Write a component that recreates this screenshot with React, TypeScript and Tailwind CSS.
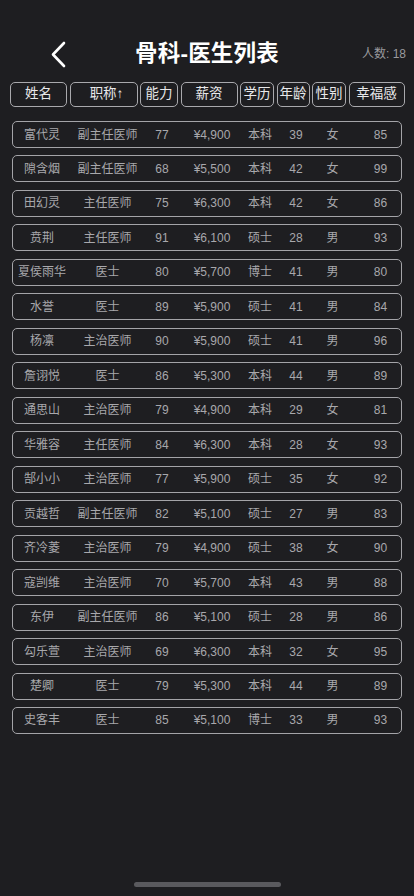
import React from "react";

const rows: string[][] = [
  ["富代灵", "副主任医师", "77", "¥4,900", "本科", "39", "女", "85"],
  ["隙含烟", "副主任医师", "68", "¥5,500", "本科", "42", "女", "99"],
  ["田幻灵", "主任医师", "75", "¥6,300", "本科", "42", "女", "86"],
  ["贲荆", "主任医师", "91", "¥6,100", "硕士", "28", "男", "93"],
  ["夏侯雨华", "医士", "80", "¥5,700", "博士", "41", "男", "80"],
  ["水誉", "医士", "89", "¥5,900", "硕士", "41", "男", "84"],
  ["杨凛", "主治医师", "90", "¥5,900", "硕士", "41", "男", "96"],
  ["詹诩悦", "医士", "86", "¥5,300", "本科", "44", "男", "89"],
  ["通思山", "主治医师", "79", "¥4,900", "本科", "29", "女", "81"],
  ["华雅容", "主任医师", "84", "¥6,300", "本科", "28", "女", "93"],
  ["郜小小", "主治医师", "77", "¥5,900", "硕士", "35", "女", "92"],
  ["贡越哲", "副主任医师", "82", "¥5,100", "硕士", "27", "男", "83"],
  ["齐冷菱", "主治医师", "79", "¥4,900", "硕士", "38", "女", "90"],
  ["寇剀维", "主治医师", "70", "¥5,700", "本科", "43", "男", "88"],
  ["东伊", "副主任医师", "86", "¥5,100", "硕士", "28", "男", "86"],
  ["勾乐萱", "主治医师", "69", "¥6,300", "本科", "32", "女", "95"],
  ["楚卿", "医士", "79", "¥5,300", "本科", "44", "男", "89"],
  ["史客丰", "医士", "85", "¥5,100", "博士", "33", "男", "93"],
];

const headers: { label: string; cls: string }[] = [
  { label: "姓名", cls: "w-[57px]" },
  { label: "职称↑", cls: "w-[68px] pl-[6px]" },
  { label: "能力", cls: "w-[38px]" },
  { label: "薪资", cls: "w-[57px]" },
  { label: "学历", cls: "w-[34px]" },
  { label: "年龄", cls: "w-[33px]" },
  { label: "性别", cls: "w-[34px]" },
  { label: "幸福感", cls: "w-[56px]" },
];

export default function App() {
  return (
    <div className="w-[414px] h-[896px] bg-[#1e1e21] font-['Liberation_Sans','Noto_Sans_CJK_SC',sans-serif] flex flex-col overflow-hidden">
      {/* Top bar */}
      <div className="grid grid-cols-[1fr_auto_1fr] items-center h-[28px] mt-[40px]">
        <div className="pl-[50px] flex items-center">
          <svg width="16" height="27" viewBox="0 0 16 27" fill="none">
            <path d="M14 2 L3 13.5 L14 25" stroke="#ffffff" strokeWidth="2.6" strokeLinecap="round" strokeLinejoin="round" />
          </svg>
        </div>
        <div className="text-white text-[22.5px] font-bold leading-none tracking-[0.2px]">骨科-医生列表</div>
        <div className="flex justify-end pr-[8px] text-[12px] text-[#9a9a9e]">人数: 18</div>
      </div>

      {/* Header buttons */}
      <div className="flex gap-[2.5px] pl-[10px] mt-[14px]">
        {headers.map((h) => (
          <div
            key={h.label}
            className={`${h.cls} h-[25px] border border-[#a9a9ad] rounded-[5px] flex items-center justify-center text-[13.5px] text-[#e8e8ea]`}
          >
            {h.label}
          </div>
        ))}
      </div>

      {/* Rows */}
      <div className="flex flex-col gap-[7.47px] mx-[12px] mt-[14px]">
        {rows.map((r, i) => (
          <div
            key={i}
            className="h-[27px] border border-[#a4a4a8] rounded-[5px] grid grid-cols-[58px_73px_36px_64px_32px_40px_33px_52px] items-center text-[12px] text-[#a8a8ac]"
          >
            <div className="text-center whitespace-nowrap">{r[0]}</div>
            <div className="text-center whitespace-nowrap">{r[1]}</div>
            <div className="text-center">{r[2]}</div>
            <div className="text-center">{r[3]}</div>
            <div className="text-center">{r[4]}</div>
            <div className="text-center">{r[5]}</div>
            <div className="text-center">{r[6]}</div>
            <div className="text-center pl-[11px]">{r[7]}</div>
          </div>
        ))}
      </div>

      <div className="flex-1" />
      <div className="flex justify-center pb-[9px]">
        <div className="w-[147px] h-[5px] rounded-full bg-[#5a5a5e]" />
      </div>
    </div>
  );
}
